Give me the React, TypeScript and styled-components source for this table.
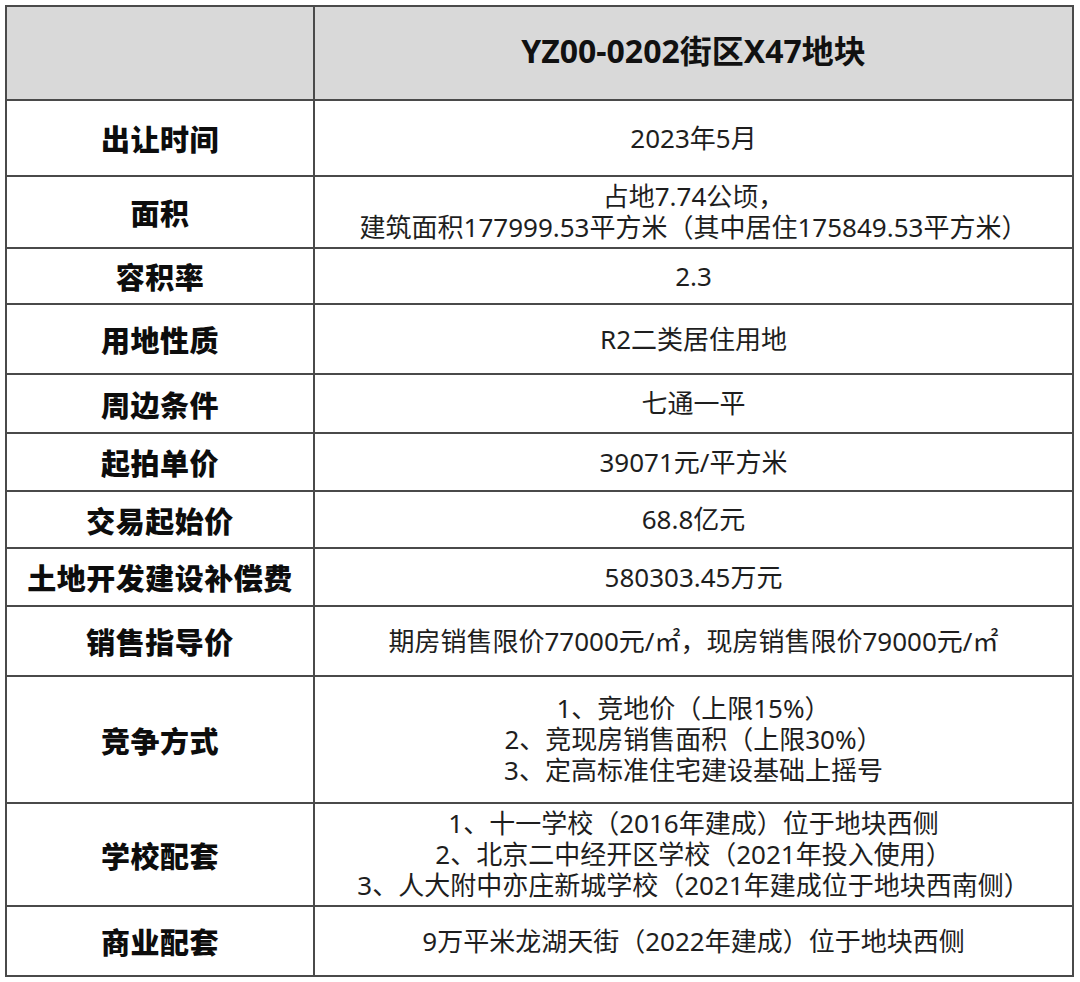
import { FunctionComponent } from "react";
import styled, { createGlobalStyle } from "styled-components";

const GlobalStyle = createGlobalStyle`
  html, body {
    margin: 0;
    padding: 0;
    background: #ffffff;
  }
`;

const Page = styled.div`
  width: 1080px;
  height: 982px;
  box-sizing: border-box;
  padding: 5px 6px 0 5px;
  background: #ffffff;
`;

const Table = styled.table`
  width: 1069px;
  border-collapse: collapse;
  table-layout: fixed;
  font-family: "Noto Sans", "Noto Sans CJK SC", sans-serif;
  color: #1a1a1a;
`;

const Row = styled.tr<{ $h: number }>`
  height: ${(p) => p.$h}px;
`;

const HeadCell = styled.th`
  background-color: #d9d9d9;
  border: 2px solid #4a4a4a;
  padding: 0 0 8px 0;
  text-align: center;
  font-size: 32px;
  font-weight: 700;
  color: #111111;
`;

const Label = styled.td`
  width: 306px;
  border: 2px solid #4a4a4a;
  padding: 0;
  text-align: center;
  font-family: "Noto Sans CJK SC", sans-serif;
  font-size: 29px;
  font-weight: 900;
  color: #0d0d0d;
  letter-spacing: 0.5px;
`;

const Value = styled.td`
  border: 2px solid #4a4a4a;
  padding: 0;
  text-align: center;
  font-size: 26px;
  line-height: 31px;
  font-weight: 400;
  color: #1e1e1e;
`;

type Item = { label: string; h: number; lines: string[] };

const rows: Item[] = [
  { label: "出让时间", h: 76, lines: ["2023年5月"] },
  {
    label: "面积",
    h: 72,
    lines: ["占地7.74公顷，", "建筑面积177999.53平方米（其中居住175849.53平方米）"],
  },
  { label: "容积率", h: 56, lines: ["2.3"] },
  { label: "用地性质", h: 70, lines: ["R2二类居住用地"] },
  { label: "周边条件", h: 59, lines: ["七通一平"] },
  { label: "起拍单价", h: 58, lines: ["39071元/平方米"] },
  { label: "交易起始价", h: 57, lines: ["68.8亿元"] },
  { label: "土地开发建设补偿费", h: 58, lines: ["580303.45万元"] },
  {
    label: "销售指导价",
    h: 70,
    lines: ["期房销售限价77000元/㎡，现房销售限价79000元/㎡"],
  },
  {
    label: "竞争方式",
    h: 127,
    lines: ["1、竞地价（上限15%）", "2、竞现房销售面积（上限30%）", "3、定高标准住宅建设基础上摇号"],
  },
  {
    label: "学校配套",
    h: 103,
    lines: [
      "1、十一学校（2016年建成）位于地块西侧",
      "2、北京二中经开区学校（2021年投入使用）",
      "3、人大附中亦庄新城学校（2021年建成位于地块西南侧）",
    ],
  },
  { label: "商业配套", h: 70, lines: ["9万平米龙湖天街（2022年建成）位于地块西侧"] },
];

const App: FunctionComponent = () => {
  return (
    <Page>
      <GlobalStyle />
      <Table>
        <colgroup>
          <col style={{ width: 308 }} />
          <col />
        </colgroup>
        <thead>
          <Row $h={94}>
            <HeadCell />
            <HeadCell>YZ00-0202街区X47地块</HeadCell>
          </Row>
        </thead>
        <tbody>
          {rows.map((r) => (
            <Row key={r.label} $h={r.h}>
              <Label>{r.label}</Label>
              <Value>
                {r.lines.map((l, i) => (
                  <div key={i}>{l}</div>
                ))}
              </Value>
            </Row>
          ))}
        </tbody>
      </Table>
    </Page>
  );
};

export default App;
